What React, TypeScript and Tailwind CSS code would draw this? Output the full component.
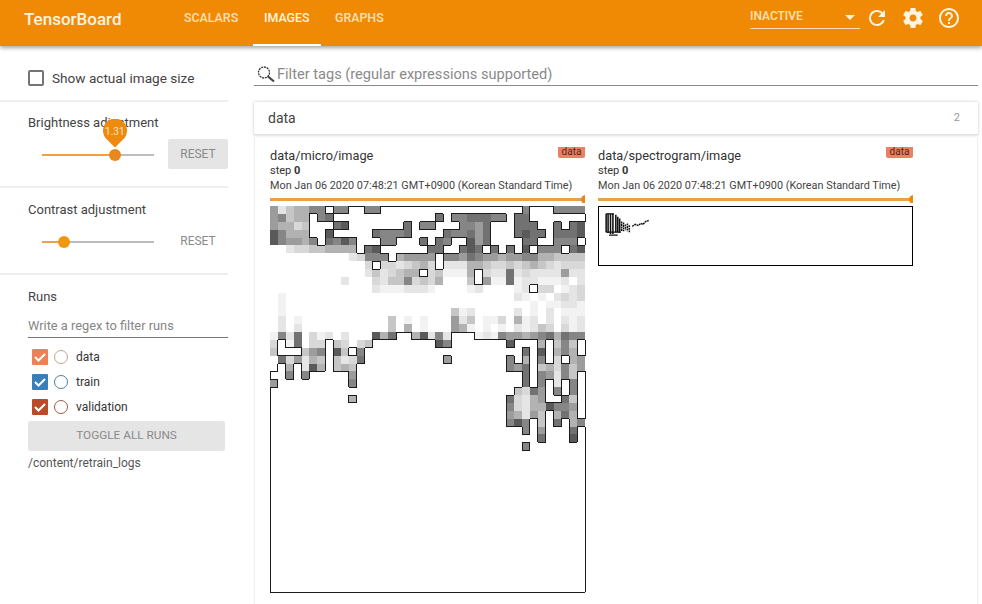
import { useMemo } from "react";

const GREYS: Record<string, string> = {
  "0": "#ffffff",
  "1": "#5a5a5a",
  "2": "#727272",
  "3": "#868686",
  "4": "#9c9c9c",
  "5": "#b2b2b2",
  "6": "#c6c6c6",
  "7": "#d8d8d8",
  "8": "#e5e5e5",
  "9": "#f2f2f2",
};

// one char per cell: x = background showing through (gets the black outline), 0-9 = grey level
const MICRO_ROWS = [
  "4865533 x 33 xx 33 xxxxxxxxxxxxxxxxxx 3 xxx 3333",
  "43655 x 32 xxxxxxxxxxxxx 2 x 3322233 x 22 xxxxxxx",
  "45576 xxx 21 xxxxxxx 2 x 33 xxx 3342 xxx 222 xx 2 x 21",
  "13555 xx 1 xxxxx 23332 xxxx 233242 xxx 2122 x 2221",
  "134453 x 2313 xxx 33 xxx 2 x 23 xx 142 xxxx 22 xx 333 x",
  "00 877665555 x 21 xxxxxx 22 xx 212 x 2 x 2 x 1 x 333 x 21",
  "0000000000 87 333 x 54444 x 334234454433556666",
  "000000000000 7 x 7787657 x 888556776765678777",
  "000000000000 8687655 x 769995 x 7882878888488",
  "000000000 8 000 786637675 000 6 x 4992988999808",
  "0000000000000 89998889 0000 98 0000 98 x 770987",
  "09 00000000000000000000000000000 890908787",
  "09 00000000000000000000000000000 009099889",
  "09 000000000000000000000 698 00000 809080999",
  "0809 00000000000 6 0 9 0 9 000 486 0 997 0 598080898",
  "0808 00000000000 6 0 5 0 9 000 459 0 909 0 898670798",
  "9382079808 000 152 xx 51838 xxx 98934454325233",
  "7 x 92077 x 67076 xxxxxxxx 13 xxxxxxx 1 xxx 5 x 636 x",
  "6 xxx 643 x 16 x 3 xxxxxxxxxxxxxxxxxxxx 2 x 1 x 535 x",
  "0274856 x 6872 xxxxxxxxxx 4 xxxxxxx 3 x 5 x 3 x 7 x 54",
  "0 x 5 x 815 x 656 xxxxxxxxxxxxxxxxxxx 342 x 657364",
  "xx 3 x 3 xxxxx 4 xxxxxxxxxxxxxxxxxxxxx 2 x 34836 x",
  "4 xxxxxxxxx 3 xxxxxxxxxxxxxxxxxxxxx 2 x 3 x 8 x 3 x",
  "xxxxxxxxxxxxxxxxxxxxxxxxxxxxxxx 6724 x 3 x 3 x",
  "xxxxxxxxxx 5 xxxxxxxxxxxxxxxxxxx 27854 xx 26 x",
  "xxxxxxxxxxxxxxxxxxxxxxxxxxxxxx 378551334 x",
  "xxxxxxxxxxxxxxxxxxxxxxxxxxxxxx 45846 x 525 x",
  "xxxxxxxxxxxxxxxxxxxxxxxxxxxxxx 313 x 6 x 2 x 53",
  "xxxxxxxxxxxxxxxxxxxxxxxxxxxxxxxx 3 x 4 xxx 2 x",
  "xxxxxxxxxxxxxxxxxxxxxxxxxxxxxxxxxx 2 xxx 1 x",
  "xxxxxxxxxxxxxxxxxxxxxxxxxxxxxxxx 3",
];

const COLS = 40;
const ROWS = 49;

function MicroImage() {
  const { cells, outline } = useMemo(() => {
    const grid: string[] = [];
    for (let r = 0; r < ROWS; r++) {
      grid.push((MICRO_ROWS[r] ?? "").replace(/ /g, "").padEnd(COLS, "x"));
    }
    const isOpen = (r: number, c: number) => grid[r]?.[c] === "x";
    const inside = (r: number, c: number) => r >= 0 && r < ROWS && c >= 0 && c < COLS;
    const cells: { r: number; c: number; fill: string }[] = [];
    let outline = "";
    for (let r = 0; r < ROWS; r++) {
      for (let c = 0; c < COLS; c++) {
        if (!isOpen(r, c)) {
          cells.push({ r, c, fill: GREYS[grid[r][c]] });
          continue;
        }
        if (!inside(r - 1, c) || !isOpen(r - 1, c)) outline += `M${c} ${r}h1`;
        if (!inside(r + 1, c) || !isOpen(r + 1, c)) outline += `M${c} ${r + 1}h1`;
        if (!inside(r, c - 1) || !isOpen(r, c - 1)) outline += `M${c} ${r}v1`;
        if (!inside(r, c + 1) || !isOpen(r, c + 1)) outline += `M${c + 1} ${r}v1`;
      }
    }
    return { cells, outline };
  }, []);

  return (
    <svg viewBox={`0 0 ${COLS} ${ROWS}`} preserveAspectRatio="none" className="block h-[386px] w-[315px] overflow-visible" shapeRendering="crispEdges">
      {cells.map((cell) => (
        <rect key={`${cell.r}-${cell.c}`} x={cell.c} y={cell.r} width={1.02} height={1.02} fill={cell.fill} />
      ))}
      <path d={outline} fill="none" stroke="#1c1c1c" strokeWidth={1} vectorEffect="non-scaling-stroke" />
    </svg>
  );
}

function SpectrogramImage() {
  return (
    <svg viewBox="0 0 315 60" className="block h-[60px] w-[315px] border border-black">
      <path d="M3 7v19M5 7v20M7.500 7v21M10 7v21M13 8v18M15 10v16M17 12v15" stroke="#111" strokeWidth={1.6} fill="none" />
      <path d="M3 7h8M3 26h15M6 29h9" stroke="#111" strokeWidth={1.3} fill="none" />
      <path d="M19 15v10M21 16v9M23 18v6M25 17v8M27 19v7M30 20l3-2 3 1 3-2 2 1 3-3 3-1" stroke="#111" strokeWidth={1.5} fill="none" strokeDasharray="2 0.6" />
    </svg>
  );
}

function Slider({ percent, filled, pin }: { percent: number; filled?: boolean; pin?: string }) {
  return (
    <div className="relative h-[11px] w-[112px] flex-none">
      <div className="absolute left-0 right-0 top-[5px] h-[2px] bg-[#bdbdbd]" />
      <div className="absolute left-0 top-[5px] h-[2px] bg-[#f0a040]" style={{ width: `${percent}%` }} />
      <div
        className={`absolute top-0 h-[12px] w-[12px] -translate-x-1/2 rounded-full ${filled ? "bg-[#e8871c]" : "bg-[#f0960f]"}`}
        style={{ left: `${percent}%` }}
      />
      {pin && (
        <div className="absolute bottom-[12px] flex h-[29px] w-[24px] -translate-x-1/2 justify-center" style={{ left: `${percent}%` }}>
          <svg viewBox="0 0 24 29" className="absolute inset-0 h-[29px] w-[24px]">
            <path d="M12 28.500 L4 20.500 A12 12 0 1 1 20 20.500 Z" fill="#ee8a0e" />
          </svg>
          <span className="relative mt-[7px] text-[10px] leading-[12px] text-[#fde3c0]">{pin}</span>
        </div>
      )}
    </div>
  );
}

function RunRow({ name, box, ring }: { name: string; box: string; ring: string }) {
  return (
    <div className="ml-[4px] flex h-[25px] items-center">
      <div className={`flex h-[16px] w-[16px] flex-none items-center justify-center rounded-[1px] ${box}`}>
        <svg viewBox="0 0 16 16" className="h-[16px] w-[16px]">
          <path d="M3 8l3.500 3.500L13 5" fill="none" stroke="#fff" strokeWidth={2} />
        </svg>
      </div>
      <div className={`ml-[6px] h-[14px] w-[14px] flex-none rounded-full border-[1.5px] bg-white ${ring}`} />
      <span className="ml-[8px] text-[12px] text-[#333]">{name}</span>
    </div>
  );
}

function ImageCard({ title, children }: { title: string; children: React.ReactNode }) {
  return (
    <div className="w-[315px] flex-none">
      <div className="flex h-[20px] items-start justify-between">
        <span className="pt-[3px] text-[12.750px] leading-[18px] text-[#333]">{title}</span>
        <span className="mt-[3px] h-[11px] w-[27px] rounded-b-[2px] bg-[#ea8166] text-center text-[10px] leading-[9px] text-[#5a1f10]">
          data
        </span>
      </div>
      <div className="text-[11px] leading-[13px] text-[#333]">
        step <b className="font-bold">0</b>
      </div>
      <div className="mt-[1px] whitespace-nowrap text-[10.850px] leading-[15px] text-[#444]">Mon Jan 06 2020 07:48:21 GMT+0900 (Korean Standard Time)</div>
      <div className="relative mb-[3px] mt-[2px] h-[8px] overflow-hidden">
        <div className="absolute left-0 right-0 top-[3px] h-[3px] bg-[#e8a04a]" />
        <div className="absolute -right-[5px] top-0 h-[9px] w-[9px] rounded-full bg-[#e8871c]" />
      </div>
      {children}
    </div>
  );
}

export default function App() {
  return (
    <div className="flex h-[604px] w-[982px] flex-col overflow-hidden bg-white font-['Roboto',sans-serif]">
      <header className="relative z-10 flex h-[46px] flex-none items-start bg-[#f08a05] text-white shadow-[0_2px_4px_rgba(0,0,0,0.35)]">
        <span className="ml-[24px] mt-[9px] w-[135px] text-[17px] font-medium leading-[20px] text-[#fff3e2]">TensorBoard</span>
        <nav className="flex text-[12.400px] font-medium">
          <span className="w-[94px] pl-[25px] pt-[9px] text-[#fde0b8]">SCALARS</span>
          <span className="h-[46px] w-[68px] border-b-2 border-white pl-[11px] pt-[9px] text-[#fff3e2]">IMAGES</span>
          <span className="pl-[14px] pt-[9px] text-[#fde0b8]">GRAPHS</span>
        </nav>
        <div className="ml-auto mr-[122px] mt-[9px] flex h-[20px] w-[110px] items-start justify-between border-b border-[#fde0b8] text-[12px] leading-[14px] text-[#fde0b8]">
          <span className="font-medium">INACTIVE</span>
          <span className="mr-[5px] mt-[6px] h-0 w-0 border-x-[5px] border-t-[5px] border-x-transparent border-t-[#fff0dc]" />
        </div>
        <div className="absolute right-[21px] top-[6px] flex gap-[12px] text-[#fff3e2]">
          <svg viewBox="0 0 24 24" className="h-[24px] w-[24px]" fill="currentColor">
            <path d="M17.650 6.350C16.200 4.900 14.210 4 12 4c-4.420 0-7.990 3.580-7.990 8s3.570 8 7.990 8c3.730 0 6.840-2.550 7.730-6h-2.080c-.82 2.330-3.040 4-5.650 4-3.310 0-6-2.690-6-6s2.690-6 6-6c1.660 0 3.140.69 4.220 1.780L13 11h7V4l-2.350 2.350z" />
          </svg>
          <svg viewBox="0 0 24 24" className="h-[24px] w-[24px]" fill="currentColor">
            <path d="M19.430 12.980c.04-.32.07-.64.07-.98s-.03-.66-.07-.98l2.110-1.650c.19-.15.24-.42.12-.64l-2-3.460c-.12-.22-.39-.3-.61-.22l-2.490 1c-.52-.4-1.080-.73-1.690-.98l-.38-2.650C14.460 2.180 14.250 2 14 2h-4c-.25 0-.46.18-.49.42l-.38 2.650c-.61.25-1.170.59-1.690.98l-2.490-1c-.23-.09-.49 0-.61.22l-2 3.460c-.13.22-.07.49.12.64l2.110 1.650c-.04.32-.07.65-.07.98s.03.66.07.98l-2.110 1.650c-.19.15-.24.42-.12.64l2 3.460c.12.22.39.3.61.22l2.490-1c.52.4 1.080.73 1.690.98l.38 2.650c.03.24.24.42.49.42h4c.25 0 .46-.18.49-.42l.38-2.650c.61-.25 1.170-.59 1.690-.98l2.490 1c.23.09.49 0 .61-.22l2-3.460c.12-.22.07-.49-.12-.64l-2.110-1.650zM12 15.500c-1.930 0-3.500-1.570-3.500-3.500s1.570-3.500 3.500-3.500 3.500 1.570 3.500 3.500-1.570 3.500-3.500 3.500z" />
          </svg>
          <svg viewBox="0 0 24 24" className="h-[24px] w-[24px]" fill="currentColor">
            <path d="M11 18h2v-2h-2v2zm1-16C6.480 2 2 6.480 2 12s4.480 10 10 10 10-4.480 10-10S17.520 2 12 2zm0 18c-4.410 0-8-3.590-8-8s3.590-8 8-8 8 3.590 8 8-3.590 8-8 8zm0-14c-2.210 0-4 1.790-4 4h2c0-1.100.9-2 2-2s2 .9 2 2c0 2-3 1.750-3 5h2c0-2.250 3-2.500 3-5 0-2.210-1.790-4-4-4z" />
          </svg>
        </div>
      </header>

      <div className="flex min-h-0 flex-1">
        <aside className="w-[228px] flex-none text-[#444]">
          <div className="flex h-[56px] items-center border-b-2 border-[#eeeeee] pl-[28px] pt-[10px]">
            <div className="h-[16px] w-[16px] rounded-[2px] border-2 border-[#757575]" />
            <span className="ml-[8px] text-[13.600px] text-[#444]">Show actual image size</span>
          </div>
          <div className="h-[86px] border-b-2 border-[#eeeeee] pl-[28px] pt-[13px]">
            <div className="text-[13px] leading-[16px] text-[#444]">Brightness adjustment</div>
            <div className="mt-[8px] flex items-center">
              <div className="ml-[14px]">
                <Slider percent={65} filled pin="1.31" />
              </div>
              <div className="ml-[14px] flex h-[30px] w-[60px] items-center justify-center rounded-[2px] bg-[#e5e5e5] text-[12px] text-[#8a8a8a]">RESET</div>
            </div>
          </div>
          <div className="h-[87px] border-b-2 border-[#eeeeee] pl-[28px] pt-[14px]">
            <div className="text-[13px] leading-[16px] text-[#444]">Contrast adjustment</div>
            <div className="mt-[8px] flex h-[30px] items-center">
              <div className="ml-[14px]">
                <Slider percent={20} />
              </div>
              <div className="ml-[14px] flex h-[30px] w-[60px] items-center justify-center text-[12px] text-[#8a8a8a]">RESET</div>
            </div>
          </div>
          <div className="pl-[28px] pt-[14px]">
            <div className="text-[13px] leading-[16px] text-[#444]">Runs</div>
            <div className="mt-[13px] h-[20px] border-b border-[#777] text-[12.800px] leading-[16px] text-[#858585]">Write a regex to filter runs</div>
            <div className="mt-[6px]">
              <RunRow name="data" box="bg-[#ee8059]" ring="border-[#c9a08c]" />
              <RunRow name="train" box="bg-[#3a7fb8]" ring="border-[#4a7f9f]" />
              <RunRow name="validation" box="bg-[#bb4a29]" ring="border-[#9a5c48]" />
            </div>
            <div className="mt-[2px] flex h-[30px] w-[197px] items-center justify-center rounded-[2px] bg-[#e5e5e5] text-[11.800px] text-[#8a8a8a]">TOGGLE ALL RUNS</div>
            <div className="mt-[5px] text-[12px] leading-[15px] text-[#555]">/content/retrain_logs</div>
          </div>
        </aside>

        <main className="ml-[26px] mr-[4px] flex min-w-0 flex-1 flex-col">
          <div className="flex h-[40px] flex-none items-end border-b border-[#8a8a8a] pb-[2px]">
            <svg viewBox="0 0 20 18" className="ml-[2px] h-[18px] w-[20px] flex-none">
              <circle cx="8" cy="7.500" r="5.500" fill="none" stroke="#333" strokeWidth="1.300" strokeDasharray="2 0.8" />
              <path d="M12 11.500l6 5" stroke="#444" strokeWidth="2.200" />
            </svg>
            <span className="ml-[1px] text-[14.600px] leading-[18px] text-[#8a8a8a]">Filter tags (regular expressions supported)</span>
          </div>
          <div className="mt-[16px] flex h-[33px] flex-none items-center justify-between border-b border-[#e0e0e0] pl-[14px] pr-[18px] shadow-[0_0_3px_rgba(0,0,0,0.22)]">
            <span className="text-[14px] text-[#444]">data</span>
            <span className="text-[11px] text-[#999]">2</span>
          </div>
          <div className="flex min-h-0 flex-1 gap-[13px] border-x border-[#eeeeee] pl-[15px] pt-[9px]">
            <ImageCard title="data/micro/image">
              <MicroImage />
            </ImageCard>
            <ImageCard title="data/spectrogram/image">
              <SpectrogramImage />
            </ImageCard>
          </div>
        </main>
      </div>
    </div>
  );
}
